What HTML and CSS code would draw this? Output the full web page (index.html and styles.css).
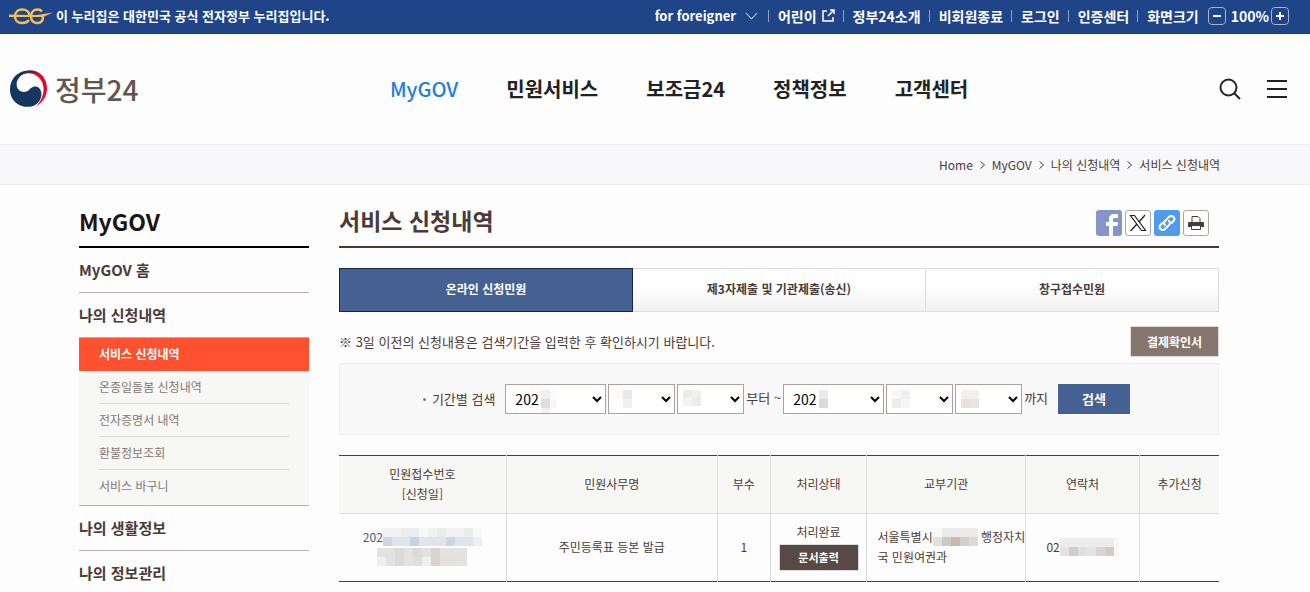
FILE: index.html
```html
<!DOCTYPE html>
<html lang="ko">
<head>
<meta charset="UTF-8">
<meta name="viewport" content="width=device-width, initial-scale=1">
<title>서비스 신청내역 | 정부24</title>
<link rel="stylesheet" href="styles.css">
</head>
<body>
<div class="top-bar">
  <p class="official">
    <svg class="eg-mark" width="44" height="18" viewBox="0 0 44 18" fill="none" stroke="#f6bf4f" stroke-width="2.500">
      <path d="M20 13C18.500 15.200 16 16 13 16C8.500 16 6 13 6 9.500C6 5 9 2.500 13 2.500C17.500 2.500 20.500 5 20.500 9"/>
      <path d="M33 4.500C32 3.200 30.500 2.500 28.500 2.500C24.500 2.500 22 5.500 22 9.500C22 13.500 24.500 16 28.500 16C32 16 34 13.500 34 9.500"/>
      <path d="M0 7.500L20 8H28L44 5.500L34 10H0Z" fill="#f6bf4f" stroke="none"/>
    </svg>
    이 누리집은 대한민국 공식 전자정부 누리집입니다.
  </p>
  <ul class="util">
    <li class="foreigner"><a href="#">for foreigner
      <svg class="chevron" width="13" height="8" viewBox="0 0 13 8" fill="none" stroke="#fff"><path d="M1 1L6.500 7L12 1"/></svg></a></li>
    <li><a href="#">어린이
      <svg width="13" height="13" viewBox="0 0 13 13" fill="none" stroke="#fff" stroke-width="1.500"><path d="M5 2H1V12H11V8M8 1H12V5M12 1L6 7"/></svg></a></li>
    <li><a href="#">정부24소개</a></li>
    <li><a href="#">비회원종료</a></li>
    <li><a href="#">로그인</a></li>
    <li><a href="#">인증센터</a></li>
    <li class="zoom-control">
      <span>화면크기</span>
      <button type="button" aria-label="축소"><svg width="8" height="8" viewBox="0 0 8 8" stroke="#fff" stroke-width="2"><path d="M0 4H8"/></svg></button>
      <span>100%</span>
      <button type="button" aria-label="확대"><svg width="8" height="8" viewBox="0 0 8 8" stroke="#fff" stroke-width="2"><path d="M0 4H8M4 0V8"/></svg></button>
    </li>
  </ul>
</div>

<header class="header">
  <a class="logo" href="#">
    <svg width="38" height="38" viewBox="0 0 38 38">
      <path d="M9 6C16-2 29-1 34 8C40 18 37 30 26 36.500C33 29 35.500 20 32 12C28 3 17 1 9 6Z" fill="#e6062c"/>
      <path d="M25 1.500C19-.5 12 .5 7 4.500C0 10-2 20 2 28C6 35.500 15 38.500 23 36C31 33.500 34 23 29 18C25.500 15 21.500 17 19.500 19.500C17 22.500 11 23 8 19C4.500 13.500 8 6 15 3.500C18 2.200 22 2 27 3.500Z" fill="#14365f"/>
    </svg>
    <span>정부24</span>
  </a>
  <nav class="gnb">
    <a class="on" href="#">MyGOV</a>
    <a href="#">민원서비스</a>
    <a href="#">보조금24</a>
    <a href="#">정책정보</a>
    <a href="#">고객센터</a>
  </nav>
  <div class="header-tools">
    <button type="button" aria-label="검색 열기">
      <svg width="22" height="22" viewBox="0 0 22 22" fill="none" stroke="#222" stroke-width="2"><circle cx="9.500" cy="9.500" r="8"/><path d="M15 15L21 21"/></svg>
    </button>
    <button type="button" aria-label="전체메뉴">
      <svg width="20" height="18" viewBox="0 0 20 18" stroke="#222" stroke-width="2"><path d="M0 1H20M0 9H20M0 17H20"/></svg>
    </button>
  </div>
</header>

<div class="breadcrumb">
  <a href="#">Home</a>
  <svg width="5" height="8" viewBox="0 0 5 8" fill="none" stroke="#4b3b36"><path d="M.5.500L4.500 4L.5 7.500"/></svg>
  <a href="#">MyGOV</a>
  <svg width="5" height="8" viewBox="0 0 5 8" fill="none" stroke="#4b3b36"><path d="M.5.500L4.500 4L.5 7.500"/></svg>
  <a href="#">나의 신청내역</a>
  <svg width="5" height="8" viewBox="0 0 5 8" fill="none" stroke="#4b3b36"><path d="M.5.500L4.500 4L.5 7.500"/></svg>
  <a href="#">서비스 신청내역</a>
</div>

<div class="content">
  <aside class="side">
    <h2>MyGOV</h2>
    <ul class="lnb">
      <li><a href="#">MyGOV 홈</a></li>
      <li><a href="#">나의 신청내역</a>
        <ul class="sub">
          <li class="on"><a href="#">서비스 신청내역</a></li>
          <li><a href="#">온종일돌봄 신청내역</a></li>
          <li><a href="#">전자증명서 내역</a></li>
          <li><a href="#">환불정보조회</a></li>
          <li><a href="#">서비스 바구니</a></li>
        </ul>
      </li>
      <li><a href="#">나의 생활정보</a></li>
      <li><a href="#">나의 정보관리</a></li>
    </ul>
  </aside>

  <main class="main">
    <div class="title-row">
      <h1>서비스 신청내역</h1>
      <div class="share">
        <button class="facebook" type="button" aria-label="페이스북">
          <svg width="26" height="26" viewBox="0 0 26 26" fill="#fff"><path d="M13 26V16H10V12H13V9C13 5.500 15 4 18 4H22V8H19C17.500 8 17 8.500 17 10V12H22L21.500 16H17V26Z"/></svg>
        </button>
        <button type="button" aria-label="X">
          <svg width="18" height="18" viewBox="0 0 18 18" fill="none" stroke="#222"><path d="M1.500 1.500H5.500L16.500 16.500H12.500Z" stroke-width="1.200"/><path d="M16 1L10 8M8 10L1.500 17" stroke-width="1.300"/></svg>
        </button>
        <button class="link" type="button" aria-label="주소 복사">
          <svg width="18" height="18" viewBox="0 0 18 18" fill="none" stroke="#fff" stroke-width="2" stroke-linecap="round"><path d="M7 11C5.500 9.500 6 8 7 7L11 3C12.500 1.500 14.500 2 15.500 3C17 4.500 16.500 6 15.500 7L13.500 9M11 7C12.500 8.500 12 10 11 11L7 15C5.500 16.500 3.500 16 2.500 15C1 13.500 1.500 12 2.500 11L4.500 9"/></svg>
        </button>
        <button type="button" aria-label="인쇄">
          <svg width="16" height="16" viewBox="0 0 16 16"><path d="M4 7V1.500H10L12 3.500V7" fill="#fff" stroke="#4b3b36"/><path d="M0 8Q0 7 1 7H15Q16 7 16 8V12H0Z" fill="#4b3b36"/><path d="M3.500 10.500H12.500V14.500H3.500Z" fill="#fff" stroke="#4b3b36"/></svg>
        </button>
      </div>
    </div>

    <div class="tabs">
      <button class="on" type="button">온라인 신청민원</button>
      <button type="button">제3자제출 및 기관제출(송신)</button>
      <button type="button">창구접수민원</button>
    </div>

    <div class="notice">
      <p>※ 3일 이전의 신청내용은 검색기간을 입력한 후 확인하시기 바랍니다.</p>
      <button type="button">결제확인서</button>
    </div>

    <form class="search">
      <label class="search-label" for="from-year">기간별 검색</label>
      <span class="select year">
        <select id="from-year"><option>202</option></select>
        <svg class="mask" width="16" height="23" viewBox="0 0 16 23" shape-rendering="crispEdges"><path d="M0 0H9V9H0Z" fill="#f0efee"/><path d="M9 0H16V9H9Z" fill="#fafafa"/><path d="M0 9H9V18H0Z" fill="#e2dcdb"/><path d="M9 9H16V18H9Z" fill="#f7f7f7"/><path d="M0 18H9V23H0Z" fill="#f3f2f2"/></svg>
      </span>
      <span class="select">
        <select aria-label="시작 월"><option></option></select>
        <svg class="mask" width="18" height="18" viewBox="0 0 18 18" shape-rendering="crispEdges"><path d="M0 0H9V9H0Z" fill="#fbfaf9"/><path d="M9 0H18V9H9Z" fill="#e9e8e8"/><path d="M9 9H18V18H9Z" fill="#f0f0f0"/></svg>
      </span>
      <span class="select">
        <select aria-label="시작 일"><option></option></select>
        <svg class="mask" width="18" height="16" viewBox="0 0 18 16" shape-rendering="crispEdges"><path d="M0 0H9V7H0Z" fill="#edebe7"/><path d="M9 0H18V7H9Z" fill="#f0f0f0"/><path d="M0 7H9V16H0Z" fill="#f3f1f1"/><path d="M9 7H18V16H9Z" fill="#ebebec"/></svg>
      </span>
      <span class="range">부터 ~</span>
      <span class="select year">
        <select aria-label="종료 연도"><option>202</option></select>
        <svg class="mask" width="9" height="18" viewBox="0 0 9 18" shape-rendering="crispEdges"><path d="M0 0H9V9H0Z" fill="#ebe9e9"/><path d="M0 9H9V18H0Z" fill="#dfd9d9"/></svg>
      </span>
      <span class="select">
        <select aria-label="종료 월"><option></option></select>
        <svg class="mask" width="18" height="18" viewBox="0 0 18 18" shape-rendering="crispEdges"><path d="M0 0H9V9H0Z" fill="#f7f7f5"/><path d="M9 0H18V9H9Z" fill="#efeff0"/><path d="M0 9H9V18H0Z" fill="#efede8"/><path d="M9 9H18V18H9Z" fill="#f5f6fa"/></svg>
      </span>
      <span class="select">
        <select aria-label="종료 일"><option></option></select>
        <svg class="mask" width="18" height="18" viewBox="0 0 18 18" shape-rendering="crispEdges"><path d="M0 0H9V9H0Z" fill="#f3f0ec"/><path d="M9 0H18V9H9Z" fill="#f0f0f0"/><path d="M0 9H9V18H0Z" fill="#e7e0dd"/><path d="M9 9H18V18H9Z" fill="#e4e4e5"/></svg>
      </span>
      <span class="range">까지</span>
      <button type="button">검색</button>
    </form>

    <table class="list">
      <colgroup>
        <col class="w-no"><col class="w-name"><col class="w-count"><col class="w-state"><col class="w-agency"><col class="w-tel"><col class="w-add">
      </colgroup>
      <thead>
        <tr>
          <th scope="col">민원접수번호<br>[신청일]</th>
          <th scope="col">민원사무명</th>
          <th scope="col">부수</th>
          <th scope="col">처리상태</th>
          <th scope="col">교부기관</th>
          <th scope="col">연락처</th>
          <th scope="col">추가신청</th>
        </tr>
      </thead>
      <tbody>
        <tr>
          <td>
            <a href="#">202<svg width="99" height="18" viewBox="0 0 99 18" shape-rendering="crispEdges">
              <path d="M0 0H99V9H0Z" fill="#f0f1f3"/><path d="M18 0H27V9H18ZM81 0H90V9H81Z" fill="#eaecee"/><path d="M27 0H36V9H27Z" fill="#e9eef4"/><path d="M36 0H45V9H36ZM90 0H99V9H90Z" fill="#f6f8fa"/><path d="M54 0H63V9H54Z" fill="#eaebed"/>
              <path d="M0 9H99V18H0Z" fill="#dee3ec"/><path d="M0 9H9V18H0ZM63 9H72V18H63Z" fill="#d1d5e1"/><path d="M27 9H36V18H27Z" fill="#c9d2e0"/><path d="M36 9H45V18H36ZM54 9H63V18H54Z" fill="#e3e3e8"/><path d="M90 9H99V18H90Z" fill="#e9eff5"/>
            </svg></a><br>
            <svg width="90" height="18" viewBox="0 0 90 18" shape-rendering="crispEdges">
              <path d="M0 0H90V18H0Z" fill="#e4e2e1"/><path d="M0 9H9V18H0ZM45 9H54V18H45Z" fill="#efefed"/><path d="M18 0H27V9H18ZM36 0H45V9H36ZM18 9H27V18H18Z" fill="#dcd9d9"/><path d="M54 0H63V18H54Z" fill="#d8d2d0"/><path d="M36 9H45V18H36Z" fill="#dddee1"/><path d="M63 9H81V18H63Z" fill="#e1e2dd"/>
            </svg>
          </td>
          <td>주민등록표 등본 발급</td>
          <td>1</td>
          <td class="state">처리완료<button type="button">문서출력</button></td>
          <td class="agency">서울특별시<svg width="45" height="18" viewBox="0 0 45 18" shape-rendering="crispEdges">
              <path d="M0 0H9V9H0Z" fill="#f9f9f8"/><path d="M9 0H45V9H9Z" fill="#ecebea"/><path d="M0 9H9V18H0Z" fill="#e4e0df"/><path d="M9 9H18V18H9Z" fill="#cdcac9"/><path d="M18 9H27V18H18Z" fill="#c4bab0"/><path d="M27 9H36V18H27Z" fill="#d2d0cf"/><path d="M36 9H45V18H36Z" fill="#dcd9d8"/>
            </svg> 행정자치<br>국 민원여권과</td>
          <td>02<svg width="59" height="18" viewBox="0 0 59 18" shape-rendering="crispEdges">
              <path d="M0 0H54V9H0Z" fill="#eeeded"/><path d="M54 0H59V18H54Z" fill="#f7f7f8"/><path d="M0 9H9V18H0Z" fill="#e7e2df"/><path d="M9 9H18V18H9ZM45 9H54V18H45Z" fill="#d2cccb"/><path d="M18 9H27V18H18Z" fill="#dedfe2"/><path d="M27 9H36V18H27Z" fill="#e4e4e8"/><path d="M36 9H45V18H36Z" fill="#d9d3d1"/>
            </svg></td>
          <td></td>
        </tr>
      </tbody>
    </table>
  </main>
</div>
</body>
</html>
```
FILE: styles.css
```css
* {
  box-sizing: border-box;
}
body {
  margin: 0;
  background: #fdfdfd;
  color: #4b3b36;
  font-family: 'Noto Sans CJK KR', sans-serif;
  font-size: 12px;
  line-height: 20px;
}
h1, h2, p, ul {
  margin: 0;
  padding: 0;
}
ul {
  list-style: none;
}
a {
  color: inherit;
  text-decoration: none;
}
button, select {
  font-family: inherit;
}
button {
  padding: 0;
  border: 0;
  background: none;
  cursor: pointer;
}

/* top bar */
.top-bar {
  display: flex;
  justify-content: space-between;
  align-items: center;
  height: 34px;
  padding: 0 21px 2px 9px;
  background: #204488;
  border-bottom: 1px solid #1a3874;
  color: #fff;
  font-weight: 700;
}
.official {
  display: flex;
  align-items: center;
  gap: 3px;
  font-size: 13px;
}
.util {
  display: flex;
  align-items: center;
  font-size: 14px;
}
.util li {
  display: flex;
  align-items: center;
}
.util a {
  display: flex;
  align-items: center;
  gap: 5px;
}
.util li + li::before {
  content: "";
  width: 1px;
  height: 12px;
  margin: 0 9px 0 8px;
  background: #8fa2c4;
}
.util .foreigner {
  margin-right: 2px;
  font-size: 13px;
}
.chevron {
  margin-left: 4px;
}
.zoom-control button {
  display: flex;
  align-items: center;
  justify-content: center;
  width: 18px;
  height: 18px;
  border: 1px solid #a6b4d0;
  border-radius: 4px;
}
.zoom-control span:first-child {
  margin-right: 9px;
}
.zoom-control button + span {
  margin: 0 2px 0 5px;
}

/* header */
.header {
  display: flex;
  align-items: center;
  height: 110px;
  padding: 0 23px 0 10px;
}
.logo {
  display: flex;
  align-items: center;
  gap: 7px;
  width: 380px;
  color: #62554f;
  font-size: 28px;
  font-weight: 500;
  line-height: 38px;
}
.gnb {
  display: flex;
  flex: 1;
  gap: 48px;
  color: #222;
  font-size: 20px;
  font-weight: 700;
  line-height: 30px;
}
.gnb .on {
  color: #1f7fe0;
  font-weight: 500;
}
.header-tools {
  display: flex;
  align-items: center;
  gap: 26px;
}
.header-tools svg {
  display: block;
}

.breadcrumb {
  display: flex;
  justify-content: flex-end;
  align-items: center;
  gap: 7px;
  height: 41px;
  padding-right: 90px;
  background: #f8f8fa;
  border-top: 1px solid #ededed;
  border-bottom: 1px solid #ededed;
}

/* layout */
.content {
  display: flex;
  gap: 30px;
  padding: 20px 91px 10px 79px;
}
.side {
  width: 230px;
  flex-shrink: 0;
}
.main {
  flex: 1;
  min-width: 0;
}

/* side menu */
.side h2 {
  height: 43px;
  border-bottom: 2px solid #000;
  color: #1c1513;
  font-size: 23px;
  font-weight: 700;
  line-height: 32px;
}
.lnb > li {
  border-bottom: 1px solid #b8aeaa;
}
.lnb > li:last-child {
  border-bottom: 0;
}
.lnb > li > a {
  display: block;
  font-size: 15px;
  font-weight: 700;
  line-height: 44px;
}
.sub {
  padding-bottom: 2px;
  background: #f7f7f5;
  border-top: 1px solid #b8aeaa;
}
.sub li {
  padding: 0 20px;
  color: #85786f;
}
.sub a {
  display: block;
  border-bottom: 1px solid #d9d9d9;
  line-height: 32px;
}
.sub li:last-child a {
  border-bottom-color: #f7f7f5;
}
.sub .on {
  background: #ff502f;
  color: #fff;
  font-weight: 700;
}
.sub .on a {
  border-bottom-color: #ff502f;
}

/* title */
.title-row {
  display: flex;
  justify-content: space-between;
  height: 43px;
  padding-right: 10px;
  border-bottom: 2px solid #4b3732;
}
.title-row h1 {
  font-size: 23px;
  font-weight: 700;
  line-height: 30px;
}
.share {
  display: flex;
  gap: 3px;
  padding-top: 5px;
}
.share button {
  display: flex;
  align-items: center;
  justify-content: center;
  width: 26px;
  height: 26px;
  background: #fff;
  border: 1px solid #b0a5a0;
  border-radius: 3px;
}
.share .facebook {
  background: #8595c8;
  border: 0;
}
.share .link {
  background: #529aec;
  border: 0;
}

/* tabs */
.tabs {
  display: flex;
  margin-top: 20px;
}
.tabs button {
  flex: 1;
  height: 44px;
  padding-bottom: 3px;
  border: 1px solid #ddd;
  border-left: 0;
  background: linear-gradient(#fefefe 40%, #f1f1f1);
  color: #4b3b36;
  font-size: 12px;
  font-weight: 700;
}
.tabs .on {
  border: 1px solid #142844;
  background: #456092;
  color: #fff;
}

.notice {
  display: flex;
  justify-content: space-between;
  align-items: center;
  margin: 14px 0 6px;
  font-size: 13px;
}
.notice button {
  width: 89px;
  height: 31px;
  border: 1px solid #e0dcda;
  background: #84766e;
  color: #fff;
  font-size: 12px;
  font-weight: 700;
}

/* period search */
.search {
  display: flex;
  justify-content: center;
  align-items: center;
  gap: 2px;
  height: 72px;
  padding-right: 5px;
  border: 1px solid #eee;
  background: #f9f9f9;
  font-size: 13px;
}
.search-label {
  display: flex;
  align-items: center;
  margin-right: 8px;
}
.search-label::before {
  content: "";
  width: 3px;
  height: 3px;
  margin-right: 6px;
  border-radius: 50%;
  background: #84766e;
}
.select {
  position: relative;
  width: 67px;
}
.select.year {
  width: 101px;
}
.select select {
  display: block;
  width: 100%;
  height: 30px;
  padding: 0 0 1px 5px;
  border: 1px solid #aea19b;
  border-radius: 0;
  background: #fff;
  color: #000;
  font-size: 14px;
}
.mask {
  position: absolute;
  top: 6px;
  left: 6px;
  pointer-events: none;
}
.year .mask {
  left: 36px;
}
.range {
  padding-bottom: 2px;
}
.search button {
  width: 72px;
  height: 30px;
  margin-left: 8px;
  padding-bottom: 2px;
  background: #456092;
  color: #fff;
  font-size: 13px;
  font-weight: 700;
}

/* result list */
.list {
  width: 100%;
  margin-top: 20px;
  border-collapse: collapse;
  table-layout: fixed;
  border-top: 1px solid #4b3b36;
  border-bottom: 1px solid #4b3b36;
}
.w-no { width: 19%; }
.w-name { width: 24%; }
.w-count { width: 6%; }
.w-state { width: 11%; }
.w-agency { width: 18%; }
.w-tel { width: 13%; }
.w-add { width: 9%; }
.list th, .list td {
  padding: 0 0 2px;
  border-left: 1px solid #ddd;
  text-align: center;
}
.list th:first-child, .list td:first-child {
  border-left: 0;
}
.list th {
  height: 58px;
  background: #f7f7f5;
  border-bottom: 1px solid #ddd;
  font-weight: 400;
}
.list td {
  height: 68px;
}
.list td svg {
  vertical-align: -4px;
}
.list td a {
  color: #456092;
}
.state button {
  display: block;
  width: 80px;
  height: 27px;
  margin: 2px auto 0;
  padding-bottom: 1px;
  border: 1px solid #ddd;
  background: #574943;
  color: #fff;
  font-size: 11px;
  font-weight: 700;
}
.list .agency {
  padding-left: 10px;
  text-align: left;
  white-space: nowrap;
}
```
